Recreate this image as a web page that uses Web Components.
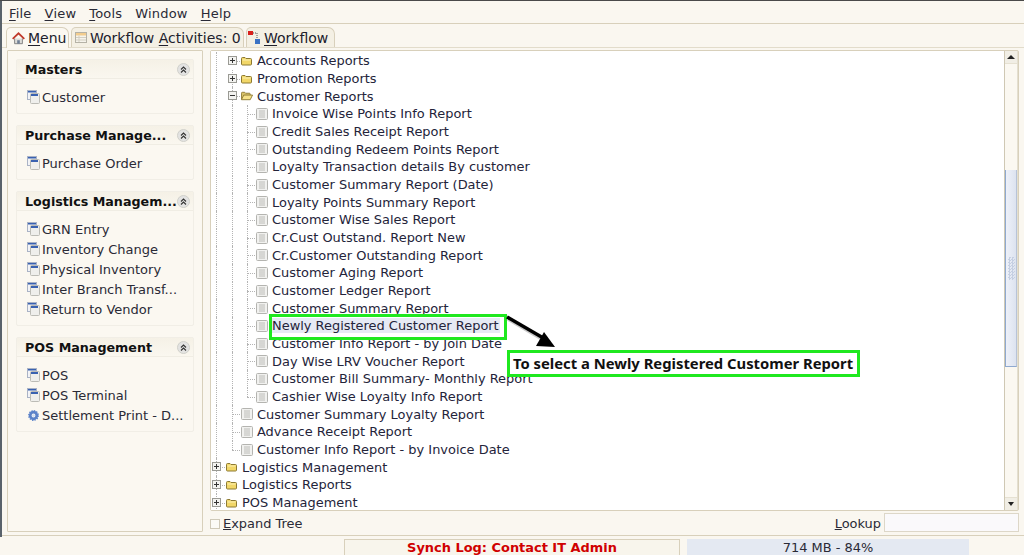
<!DOCTYPE html>
<html>
<head>
<meta charset="utf-8">
<title>Reports</title>
<style>
    html, body { margin: 0; height: 555px; overflow: hidden; }
    body { font: 12.95px "DejaVu Sans", sans-serif; color: #1c1c28; background: #faf7f0; }
    u { text-underline-offset: 2px; }
</style>
</head>
<body>
<app-shell>
    <menu-bar slot="menu">
        <menu-entry><u>F</u>ile</menu-entry>
        <menu-entry><u>V</u>iew</menu-entry>
        <menu-entry><u>T</u>ools</menu-entry>
        <menu-entry>Window</menu-entry>
        <menu-entry><u>H</u>elp</menu-entry>
    </menu-bar>
    <tab-strip slot="tabs">
        <tab-item icon="home" active style="width:63px;padding-left:5px"><u>M</u>enu</tab-item>
        <tab-item icon="table" style="width:173px;padding-left:3px">Workflow <u>A</u>ctivities: 0</tab-item>
        <tab-item icon="flow" style="width:89px;padding-left:1px"><u>W</u>orkflow</tab-item>
    </tab-strip>

    <side-panel slot="side">
        <side-card title="Masters">
            <side-item>Customer</side-item>
        </side-card>
        <side-card title="Purchase Manage...">
            <side-item>Purchase Order</side-item>
        </side-card>
        <side-card title="Logistics Managem...">
            <side-item>GRN Entry</side-item>
            <side-item>Inventory Change</side-item>
            <side-item>Physical Inventory</side-item>
            <side-item>Inter Branch Transf...</side-item>
            <side-item>Return to Vendor</side-item>
        </side-card>
        <side-card title="POS Management">
            <side-item>POS</side-item>
            <side-item>POS Terminal</side-item>
            <side-item icon="gear">Settlement Print - D...</side-item>
        </side-card>
    </side-panel>

    <report-tree slot="tree">
        <tree-row level="1" icon="closed" exp="plus" guides="0">Accounts Reports</tree-row>
        <tree-row level="1" icon="closed" exp="plus" guides="0 1">Promotion Reports</tree-row>
        <tree-row level="1" icon="open" exp="minus" guides="0 1">Customer Reports</tree-row>
        <tree-row level="2" icon="doc" guides="0 1 2">Invoice Wise Points Info Report</tree-row>
        <tree-row level="2" icon="doc" guides="0 1 2">Credit Sales Receipt Report</tree-row>
        <tree-row level="2" icon="doc" guides="0 1 2">Outstanding Redeem Points Report</tree-row>
        <tree-row level="2" icon="doc" guides="0 1 2">Loyalty Transaction details By customer</tree-row>
        <tree-row level="2" icon="doc" guides="0 1 2">Customer Summary Report (Date)</tree-row>
        <tree-row level="2" icon="doc" guides="0 1 2">Loyalty Points Summary Report</tree-row>
        <tree-row level="2" icon="doc" guides="0 1 2">Customer Wise Sales Report</tree-row>
        <tree-row level="2" icon="doc" guides="0 1 2">Cr.Cust Outstand. Report New</tree-row>
        <tree-row level="2" icon="doc" guides="0 1 2">Cr.Customer Outstanding Report</tree-row>
        <tree-row level="2" icon="doc" guides="0 1 2">Customer Aging Report</tree-row>
        <tree-row level="2" icon="doc" guides="0 1 2">Customer Ledger Report</tree-row>
        <tree-row level="2" icon="doc" guides="0 1 2">Customer Summary Report</tree-row>
        <tree-row level="2" icon="doc" guides="0 1 2" selected>Newly Registered Customer Report</tree-row>
        <tree-row level="2" icon="doc" guides="0 1 2">Customer Info Report - by Join Date</tree-row>
        <tree-row level="2" icon="doc" guides="0 1 2">Day Wise LRV Voucher Report</tree-row>
        <tree-row level="2" icon="doc" guides="0 1 2">Customer Bill Summary- Monthly Report</tree-row>
        <tree-row level="2" icon="doc" guides="0 1 2" last>Cashier Wise Loyalty Info Report</tree-row>
        <tree-row level="1" icon="doc" guides="0 1">Customer Summary Loyalty Report</tree-row>
        <tree-row level="1" icon="doc" guides="0 1">Advance Receipt Report</tree-row>
        <tree-row level="1" icon="doc" guides="0 1" last>Customer Info Report - by Invoice Date</tree-row>
        <tree-row level="0" icon="closed" exp="plus" guides="0">Logistics Management</tree-row>
        <tree-row level="0" icon="closed" exp="plus" guides="0">Logistics Reports</tree-row>
        <tree-row level="0" icon="closed" exp="plus" guides="0">POS Management</tree-row>
    </report-tree>

    <tree-footer slot="footer"></tree-footer>
    <status-bar slot="status"></status-bar>
    <callout-layer slot="over"></callout-layer>
</app-shell>

<script>
// small inline icons shared by the components
const ICONS = {
    home: `<svg width="13" height="13" viewBox="0 0 15 14"><path d="M3 7v6h9V7" fill="#dcdcd8" stroke="#777"/><rect x="6" y="9" width="3" height="4" fill="#6f7f95"/><path d="M.8 7.5 7.5 1l6.7 6.5" fill="none" stroke="#c0392b" stroke-width="2"/></svg>`,
    table: `<svg width="12" height="11" viewBox="0 0 12 11"><rect x=".5" y=".5" width="11" height="10" fill="#f6f4ec" stroke="#b5b2a6"/><rect x="1" y="1" width="10" height="2.500" fill="#f3cd8e"/><path d="M1 5.500h10M1 8h10M4 3.500V10" stroke="#d3cfc2"/></svg>`,
    flow: `<svg width="13" height="13" viewBox="0 0 13 13"><rect x="0" y="0" width="5" height="4" fill="#d8201c"/><rect x="7" y="8" width="5" height="5" fill="#3a72c4"/><path d="M5 2h4v6" fill="none" stroke="#555" stroke-dasharray="1 1"/></svg>`,
    window: `<svg width="13" height="14" viewBox="0 0 13 14"><rect x=".5" y=".5" width="9" height="9" fill="#f2f3f6" stroke="#aab3c6"/><rect x="1" y="1" width="8" height="1.500" fill="#3a62b0"/><rect x="3.500" y="3.500" width="9" height="10" rx="1" fill="#efefec" stroke="#bcbcb6"/><rect x="4" y="4" width="7" height="2" fill="#3a62b0"/></svg>`,
    gear: `<svg width="11" height="11" viewBox="0 0 12 12"><circle cx="6" cy="6" r="3.600" fill="none" stroke="#5b82c9" stroke-width="3"/><circle cx="6" cy="6" r="5.200" fill="none" stroke="#5b82c9" stroke-width="1.400" stroke-dasharray="1.500 1.200"/><circle cx="6" cy="6" r="1.500" fill="#cfdcf3"/></svg>`,
    doc: `<svg width="12" height="12" viewBox="0 0 12 12"><rect x=".5" y=".5" width="11" height="11" rx="1" fill="#f1f1ef" stroke="#b4b4b0"/><path d="M3 3h6M3 5h6M3 7h6M3 9h6" stroke="#bcbcb8"/></svg>`,
    closed: `<svg width="11" height="10" viewBox="0 0 11 10"><path d="M.5 2.500q0-1 1-1h2.500l1 1h4.500q1 0 1 1v4.500q0 1-1 1h-8q-1 0-1-1z" fill="#f2d768" stroke="#8d7a33"/><path d="M1.500 4h8" stroke="#fbf0b4"/></svg>`,
    open: `<svg width="13" height="10" viewBox="0 0 13 10"><path d="M.5 8.500v-6.500q0-1 1-1h2.500l1 1h4q1 0 1 1v1" fill="#d9c36a" stroke="#8d7a33"/><path d="M.5 9 3 4h9.500l-2.500 5z" fill="#f6e28a" stroke="#8d7a33"/></svg>`,
    plus: `<svg width="9" height="9" viewBox="0 0 9 9"><rect x=".5" y=".5" width="8" height="8" fill="#f3f3f0" stroke="#9a9a94"/><path d="M2 4.500h5M4.500 2v5" stroke="#333"/></svg>`,
    minus: `<svg width="9" height="9" viewBox="0 0 9 9"><rect x=".5" y=".5" width="8" height="8" fill="#f3f3f0" stroke="#9a9a94"/><path d="M2 4.500h5" stroke="#333"/></svg>`,
    collapse: `<svg width="13" height="13" viewBox="0 0 13 13"><circle cx="6.500" cy="6.500" r="6" fill="#e3e3e2" stroke="#d0d0ca"/><path d="M4 6.500l2.500-2.500 2.500 2.500M4 9.500 6.500 7 9 9.500" fill="none" stroke="#333" stroke-width="1.100"/></svg>`
};

class AppShell extends HTMLElement {
    constructor() {
        super();
        this.attachShadow({ mode: 'open' });
        this.shadowRoot.innerHTML = `
            <style>
                :host { display: flex; flex-direction: column; position: relative; width: 1024px; height: 555px;
                    box-sizing: border-box; border-top: 1px solid #4a4a4a; overflow: hidden; }
                .main { display: flex; gap: 7px; height: 488px; flex: none; box-sizing: border-box; padding: 2px 5px 3px 7px;
                    border-top: 1px solid #e2dccb; }
                .right { flex: 1; display: flex; flex-direction: column; min-width: 0; }
                .edge { position: absolute; left: 0; top: 0; width: 1.500px; height: 536px; background: #59626b; }
            </style>
            <slot name="menu"></slot>
            <slot name="tabs"></slot>
            <div class="main">
                <slot name="side"></slot>
                <div class="right">
                    <slot name="tree"></slot>
                    <slot name="footer"></slot>
                </div>
            </div>
            <slot name="status"></slot>
            <slot name="over"></slot>
            <div class="edge"></div>
        `;
    }
}

class MenuBar extends HTMLElement {
    constructor() {
        super();
        this.attachShadow({ mode: 'open' });
        this.shadowRoot.innerHTML = `
            <style>
                :host { display: flex; gap: 13px; height: 25px; box-sizing: border-box; padding: 2px 0 0 9px;
                    align-items: center; border-bottom: 1px solid #d8d0bb; }
            </style>
            <slot></slot>
        `;
    }
}

class MenuEntry extends HTMLElement {
    constructor() {
        super();
        this.attachShadow({ mode: 'open' });
        this.shadowRoot.innerHTML = `
            <style>:host { display: block; font-size: 13px; letter-spacing: .2px; color: #2a2a36; }</style>
            <slot></slot>
        `;
    }
}

class TabStrip extends HTMLElement {
    constructor() {
        super();
        this.attachShadow({ mode: 'open' });
        this.shadowRoot.innerHTML = `
            <style>
                :host { display: flex; gap: 2px; height: 23px; box-sizing: border-box; padding: 3px 0 0 6px; }
            </style>
            <slot></slot>
        `;
    }
}

class TabItem extends HTMLElement {
    constructor() {
        super();
        this.attachShadow({ mode: 'open' });
        const active = this.hasAttribute('active');
        this.shadowRoot.innerHTML = `
            <style>
                :host { display: flex; align-items: center; gap: 3px; box-sizing: border-box; height: ${active ? 21 : 20}px;
                    font-size: 14px; white-space: nowrap; color: #20202c;
                    border: 1px solid #d8d0bb; border-bottom: 0; border-radius: 5px 7px 0 0;
                    background: ${active ? '#fbf8f1' : '#f4f0e4'}; position: relative; z-index: ${active ? 1 : 0}; }
                svg { flex: none; }
            </style>
            ${ICONS[this.getAttribute('icon')]}
            <span><slot></slot></span>
        `;
    }
}

class SidePanel extends HTMLElement {
    constructor() {
        super();
        this.attachShadow({ mode: 'open' });
        this.shadowRoot.innerHTML = `
            <style>
                :host { display: flex; flex-direction: column; gap: 11px; flex: none; width: 196px; box-sizing: border-box;
                    padding: 8px 8px 0; border: 1px solid #d8d0bb; border-radius: 1px; background: #fbf8f1; }
            </style>
            <slot></slot>
        `;
    }
}

class SideCard extends HTMLElement {
    constructor() {
        super();
        this.attachShadow({ mode: 'open' });
        this.shadowRoot.innerHTML = `
            <style>
                :host { display: block; border: 1px solid #f1eee6; border-radius: 2px; }
                .head { display: flex; align-items: center; justify-content: space-between; height: 18px;
                    padding: 0 3px 0 8px; border-bottom: 1px solid #f0ede4;
                    background: linear-gradient(#f5f1e6, #faf7ef); }
                .title { font-weight: bold; font-size: 12.7px; color: #111; white-space: nowrap; }
                .body { padding: 8px 0 6px 10px; display: flex; flex-direction: column; }
                svg { flex: none; }
            </style>
            <div class="head"><span class="title">${this.getAttribute('title')}</span>${ICONS.collapse}</div>
            <div class="body"><slot></slot></div>
        `;
    }
}

class SideItem extends HTMLElement {
    constructor() {
        super();
        this.attachShadow({ mode: 'open' });
        this.shadowRoot.innerHTML = `
            <style>
                :host { display: flex; align-items: center; gap: 2px; height: 20px; white-space: nowrap; color: #2a2a36; font-size: 13px; }
                .ico { width: 13px; display: flex; justify-content: center; flex: none; }
            </style>
            <span class="ico">${ICONS[this.getAttribute('icon') || 'window']}</span>
            <span><slot></slot></span>
        `;
    }
}

class ReportTree extends HTMLElement {
    constructor() {
        super();
        this.attachShadow({ mode: 'open' });
        this.shadowRoot.innerHTML = `
            <style>
                :host { display: flex; height: 461px; flex: none; box-sizing: border-box; border: 1px solid #d8d0bb; border-radius: 2px; }
                .view { flex: 1; background: #fff; overflow: hidden; min-width: 0; padding-top: 1px; }
            </style>
            <div class="view"><slot></slot></div>
            <tree-scroll></tree-scroll>
        `;
    }
}

class TreeRow extends HTMLElement {
    constructor() {
        super();
        this.attachShadow({ mode: 'open' });
        const GUIDE_X = [5, 21, 36];
        const ICON_X = [15, 30, 45];
        const level = Number(this.getAttribute('level'));
        const icon = this.getAttribute('icon');
        const exp = this.getAttribute('exp');
        const last = this.hasAttribute('last');
        const guides = this.getAttribute('guides').split(' ').map(Number);
        const lines = guides.map(g => {
            const half = last && g === level;
            return `<i class="v" style="left:${GUIDE_X[g]}px;${half ? 'bottom:50%' : ''}"></i>`;
        }).join('');
        const hline = `<i class="h" style="left:${GUIDE_X[level]}px;width:${ICON_X[level] - GUIDE_X[level] - 1}px"></i>`;
        const box = exp ? `<span class="exp" style="left:${GUIDE_X[level] - 4}px">${ICONS[exp]}</span>` : '';
        this.shadowRoot.innerHTML = `
            <style>
                :host { display: flex; align-items: center; position: relative; height: 17.68px; white-space: nowrap;
                    padding-left: ${ICON_X[level]}px; color: #24243a; }
                .v { position: absolute; top: 0; bottom: 0; border-left: 1px dotted #b4b4b4; }
                .h { position: absolute; top: 50%; border-top: 1px dotted #b4b4b4; }
                .exp { position: absolute; top: 4px; height: 9px; line-height: 0; }
                .ico { position: relative; display: flex; width: 12px; margin-right: 4px; flex: none; }
                .label { position: relative; padding: 0 1px; margin-left: -1px; }
                :host([selected]) .label { background: #e6eaf4; }
            </style>
            ${lines}${hline}${box}
            <span class="ico">${ICONS[icon]}</span>
            <span class="label"><slot></slot></span>
        `;
    }
}

class TreeScroll extends HTMLElement {
    constructor() {
        super();
        this.attachShadow({ mode: 'open' });
        this.shadowRoot.innerHTML = `
            <style>
                :host { display: flex; flex-direction: column; flex: none; width: 12px; border-left: 1px solid #cfc8b4;
                    border-right: 1px solid #e4dfd0; background: #fbf8f1; }
                .btn { display: flex; align-items: center; justify-content: center; height: 12px; flex: none;
                    background: #f1eee5; border-bottom: 1px solid #e6e1d2; }
                .btn.down { border-bottom: 0; border-top: 1px solid #e6e1d2; }
                .track { flex: 1; padding-top: 106px; }
                .thumb { height: 197px; box-sizing: border-box; border: 1px solid #8fa9cf; border-right-color: #b7c3d8; border-top: 0;
                    background: linear-gradient(90deg, #eef1f9, #dde3ef); display: flex; align-items: center; justify-content: center; }
                .grip { width: 7px; height: 23px; background: repeating-conic-gradient(#c5cfe2 0 25%, transparent 0 50%) 0 0 / 3px 3px; }
                .up { width: 0; height: 0; border: 4px solid transparent; border-top: 0; border-bottom: 4px solid #222; }
                .dn { width: 0; height: 0; border: 3.500px solid transparent; border-bottom: 0; border-top: 4px solid #222; }
            </style>
            <div class="btn"><span class="up"></span></div>
            <div class="track"><div class="thumb"><div class="grip"></div></div></div>
            <div class="btn down"><span class="dn"></span></div>
        `;
    }
}

class TreeFooter extends HTMLElement {
    constructor() {
        super();
        this.attachShadow({ mode: 'open' });
        this.shadowRoot.innerHTML = `
            <style>
                :host { display: flex; align-items: center; height: 22px; box-sizing: border-box; padding-top: 4px; color: #2a2a36; }
                .check { width: 8px; height: 8px; border: 1px solid #cfc9b8; background: #fbfaf6; margin-right: 3px; }
                .grow { flex: 1; }
                .input { width: 133px; height: 17px; margin: -2px 0 0 3px; border: 1px solid #ddd7c8; background: #faf9fb; }
            </style>
            <span class="check"></span>
            <span><u>E</u>xpand Tree</span>
            <span class="grow"></span>
            <span><u>L</u>ookup</span>
            <span class="input"></span>
        `;
    }
}

class StatusBar extends HTMLElement {
    constructor() {
        super();
        this.attachShadow({ mode: 'open' });
        this.shadowRoot.innerHTML = `
            <style>
                :host { display: flex; flex: none; height: 20px; box-sizing: border-box; padding: 3px 0 0 344px; gap: 7px;
                    border-top: 1px solid #d8d0bb; }
                div { height: 20px; line-height: 16px; text-align: center; box-sizing: border-box; }
                .log { width: 336px; border: 1px solid #d8d0bb; border-bottom: 0; color: #d00000; font-weight: bold; background: #f8f5ec; }
                .mem { width: 282px; background: #e4e9f2; color: #2a2a36; padding-top: 1px; }
            </style>
            <div class="log">Synch Log: Contact IT Admin</div>
            <div class="mem">714 MB - 84%</div>
        `;
    }
}

// green boxes and arrow drawn on top of the screenshot
class CalloutLayer extends HTMLElement {
    constructor() {
        super();
        this.attachShadow({ mode: 'open' });
        this.shadowRoot.innerHTML = `
            <style>
                :host { display: block; position: absolute; inset: 0; pointer-events: none; }
                .box { position: absolute; box-sizing: border-box; border: 3px solid #1fe81f; }
                .first { left: 269px; top: 313px; width: 238px; height: 26px; }
                .note { left: 507px; top: 349px; width: 353px; height: 27px; background: #fff; color: #111;
                    font: bold 14.8px/21px "Noto Sans", sans-serif; padding-left: 3px; white-space: nowrap; }
                svg { position: absolute; left: 500px; top: 310px; }
            </style>
            <div class="box first"></div>
            <svg width="70" height="45" viewBox="0 0 70 45">
                <path d="M7 7 46 30" stroke="#888" stroke-width="3.500" opacity=".45" transform="translate(1 1)"/>
                <path d="M7 6 45 28" stroke="#000" stroke-width="3.500"/>
                <path d="M36 35 44 21 55 36z" fill="#000"/>
            </svg>
            <div class="box note">To select a Newly Registered Customer Report</div>
        `;
    }
}

customElements.define('app-shell', AppShell);
customElements.define('menu-bar', MenuBar);
customElements.define('menu-entry', MenuEntry);
customElements.define('tab-strip', TabStrip);
customElements.define('tab-item', TabItem);
customElements.define('side-panel', SidePanel);
customElements.define('side-card', SideCard);
customElements.define('side-item', SideItem);
customElements.define('report-tree', ReportTree);
customElements.define('tree-row', TreeRow);
customElements.define('tree-scroll', TreeScroll);
customElements.define('tree-footer', TreeFooter);
customElements.define('status-bar', StatusBar);
customElements.define('callout-layer', CalloutLayer);
</script>
</body>
</html>
